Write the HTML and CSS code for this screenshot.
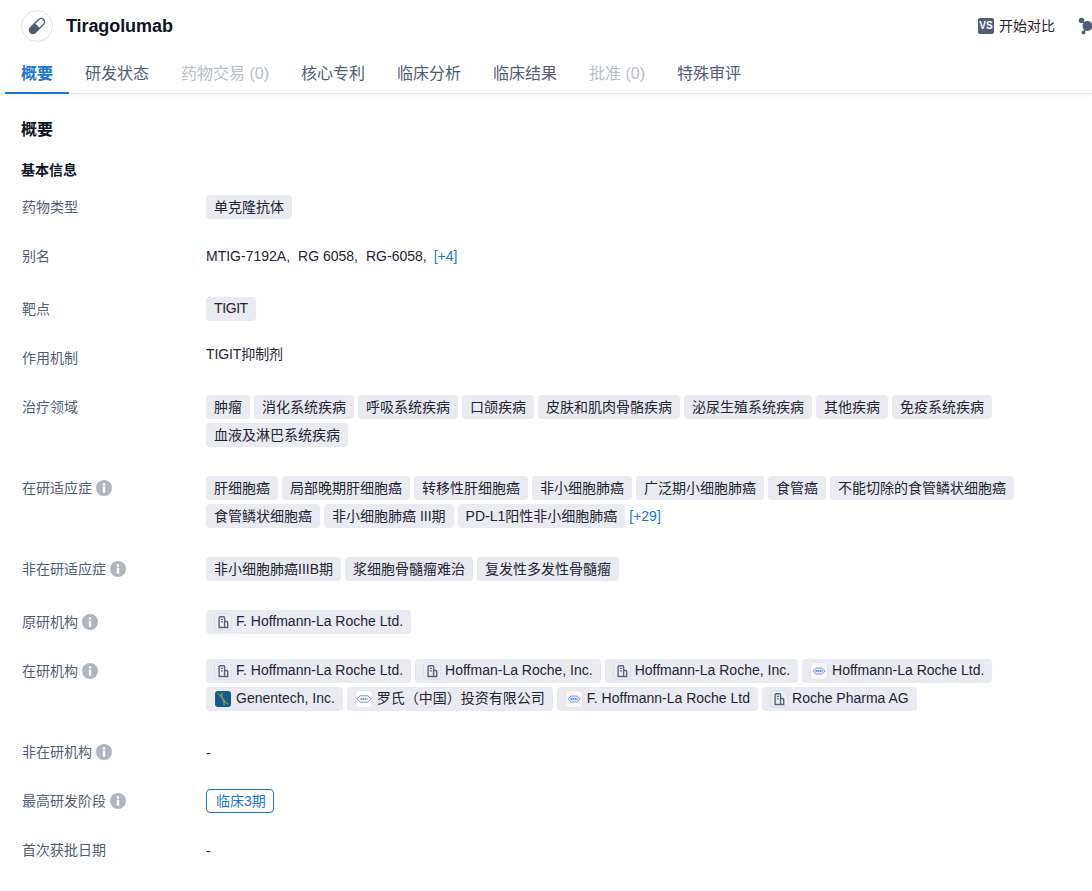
FILE: index.html
```html
<!DOCTYPE html>
<html lang="zh">
<head>
<meta charset="utf-8">
<title>Tiragolumab</title>
<link rel="stylesheet" href="styles.css">
</head>
<body>
<svg class="defs" width="0" height="0" aria-hidden="true">
  <symbol id="bld" viewBox="0 0 18 18">
    <rect x=".5" y=".5" width="17" height="17" rx="3.500" fill="#eceef2" stroke="#dcdfe7"/>
    <path d="M5.100 14.500V4.700a1 1 0 0 1 1-1h3.500a1 1 0 0 1 1 1v9.800zM10.600 8.500h2.100a1 1 0 0 1 1 1v5h-3.100" fill="none" stroke="#56647f" stroke-width="1.400"/>
    <path d="M6.900 6.300h2M6.900 8.800h2" stroke="#56647f" stroke-width="1.300"/>
  </symbol>
  <symbol id="roche" viewBox="0 0 18 18">
    <rect x=".5" y=".5" width="17" height="17" rx="3.500" fill="#fdf6f4" stroke="#e4e5ea"/>
    <path d="M2.800 9 6 6h6l3.200 3-3.200 3H6z" fill="#dde5f8" stroke="#7d9ada" stroke-width=".9"/>
    <path d="M5.500 9h7" stroke="#4f74cc" stroke-width="1.600" stroke-dasharray="1.500 .5"/>
  </symbol>
  <symbol id="roche2" viewBox="0 0 18 18">
    <rect x=".5" y=".5" width="17" height="17" rx="3.500" fill="#fff" stroke="#e4e5ea"/>
    <path d="M1.800 9 5.200 5.800h7.600L16.200 9l-3.400 3.200H5.200z" fill="#fff" stroke="#4f74cc" stroke-width=".8"/>
    <path d="M5.500 9h7" stroke="#4f74cc" stroke-width="1.600" stroke-dasharray="1.500 .5"/>
  </symbol>
  <symbol id="gene" viewBox="0 0 18 18">
    <rect width="16" height="16" x="1" y="1" rx="3" fill="#14598f"/>
    <path d="M3.500 3.500C9 6 9 12 14.500 14.500M8 3C6.500 7 11 11.500 10 15.500" fill="none" stroke="#7e9a44" stroke-width="1.300"/>
    <path d="M6 5.500l3-1M8 9h2.500M9.500 12.500l2.500-1" stroke="#7e9a44" stroke-width=".8"/>
  </symbol>
  <symbol id="info" viewBox="0 0 16 16">
    <circle cx="8" cy="8" r="8" fill="#b0b5c4"/>
    <rect x="6.800" y="3.300" width="2.400" height="2.300" fill="#fff"/>
    <rect x="6.800" y="6.800" width="2.400" height="5.900" fill="#fff"/>
  </symbol>
</svg>

<header class="topbar">
  <div class="title-wrap">
    <span class="logo">
      <svg width="18" height="18" viewBox="0 0 18 18"><g transform="rotate(-45 9 9)"><rect x="-1" y="4.800" width="20" height="8.400" rx="4.200" fill="#4f5d78"/><path d="M9.500 6.200h5.300a2.800 2.800 0 0 1 0 5.600H9.500z" fill="#fff"/></g></svg>
    </span>
    <h1 class="title">Tiragolumab</h1>
  </div>
  <div class="actions">
    <span class="vs">VS</span><span class="compare">开始对比</span>
    <svg class="share" width="16" height="18" viewBox="0 0 16 18"><circle cx="3.500" cy="3.500" r="2.800" fill="#4f5d78"/><circle cx="9.500" cy="9" r="5" fill="#4f5d78"/><circle cx="5.500" cy="15.500" r="2" fill="#4f5d78"/><path d="M3.500 3.500l6 5.500-4 6.500" stroke="#4f5d78" stroke-width="1.500" fill="none"/></svg>
  </div>
</header>

<nav class="tabs">
  <a class="tab active">概要</a>
  <a class="tab">研发状态</a>
  <a class="tab off">药物交易 (0)</a>
  <a class="tab">核心专利</a>
  <a class="tab">临床分析</a>
  <a class="tab">临床结果</a>
  <a class="tab off">批准 (0)</a>
  <a class="tab">特殊审评</a>
</nav>

<main class="content">
  <h2 class="h-main">概要</h2>
  <h3 class="h-sub">基本信息</h3>

  <div class="row"><div class="label">药物类型</div><div class="val"><span class="tag">单克隆抗体</span></div></div>

  <div class="row tall"><div class="label">别名</div><div class="val text"><span>MTIG-7192A,</span><span>RG 6058,</span><span>RG-6058,</span><a class="more">[+4]</a></div></div>

  <div class="row"><div class="label">靶点</div><div class="val"><span class="tag"><span class="narrow">TIGIT</span></span></div></div>

  <div class="row"><div class="label">作用机制</div><div class="val text raised"><span class="narrow-sm">TIGIT抑制剂</span></div></div>

  <div class="row tall"><div class="label">治疗领域</div><div class="val">
    <span class="tag">肿瘤</span><span class="tag">消化系统疾病</span><span class="tag">呼吸系统疾病</span><span class="tag">口颌疾病</span><span class="tag">皮肤和肌肉骨骼疾病</span><span class="tag">泌尿生殖系统疾病</span><span class="tag">其他疾病</span><span class="tag">免疫系统疾病</span><span class="tag">血液及淋巴系统疾病</span>
  </div></div>

  <div class="row tall"><div class="label">在研适应症<svg class="info"><use href="#info"/></svg></div><div class="val">
    <span class="tag">肝细胞癌</span><span class="tag">局部晚期肝细胞癌</span><span class="tag">转移性肝细胞癌</span><span class="tag">非小细胞肺癌</span><span class="tag">广泛期小细胞肺癌</span><span class="tag">食管癌</span><span class="tag">不能切除的食管鳞状细胞癌</span><span class="tag">食管鳞状细胞癌</span><span class="tag">非小细胞肺癌 III期</span><span class="tag">PD-L1阳性非小细胞肺癌</span><a class="more">[+29]</a>
  </div></div>

  <div class="row tall"><div class="label">非在研适应症<svg class="info"><use href="#info"/></svg></div><div class="val">
    <span class="tag">非小细胞肺癌IIIB期</span><span class="tag">浆细胞骨髓瘤难治</span><span class="tag">复发性多发性骨髓瘤</span>
  </div></div>

  <div class="row"><div class="label">原研机构<svg class="info"><use href="#info"/></svg></div><div class="val">
    <span class="tag org"><svg class="ico"><use href="#bld"/></svg><span class="latin">F. Hoffmann-La Roche Ltd.</span></span>
  </div></div>

  <div class="row tall"><div class="label">在研机构<svg class="info"><use href="#info"/></svg></div><div class="val">
    <span class="tag org"><svg class="ico"><use href="#bld"/></svg><span class="latin">F. Hoffmann-La Roche Ltd.</span></span>
    <span class="tag org"><svg class="ico"><use href="#bld"/></svg><span class="latin">Hoffman-La Roche, Inc.</span></span>
    <span class="tag org"><svg class="ico"><use href="#bld"/></svg><span class="latin">Hoffmann-La Roche, Inc.</span></span>
    <span class="tag org"><svg class="ico"><use href="#roche"/></svg><span class="latin">Hoffmann-La Roche Ltd.</span></span>
    <span class="tag org"><svg class="ico"><use href="#gene"/></svg><span class="latin">Genentech, Inc.</span></span>
    <span class="tag org"><svg class="ico"><use href="#roche2"/></svg><span class="latin">罗氏（中国）投资有限公司</span></span>
    <span class="tag org"><svg class="ico"><use href="#roche"/></svg><span class="latin">F. Hoffmann-La Roche Ltd</span></span>
    <span class="tag org"><svg class="ico"><use href="#bld"/></svg><span class="latin">Roche Pharma AG</span></span>
  </div></div>

  <div class="row"><div class="label">非在研机构<svg class="info"><use href="#info"/></svg></div><div class="val text dash">-</div></div>

  <div class="row"><div class="label">最高研发阶段<svg class="info"><use href="#info"/></svg></div><div class="val"><span class="phase">临床3期</span></div></div>

  <div class="row"><div class="label">首次获批日期</div><div class="val text dash">-</div></div>
</main>
</body>
</html>
```
FILE: styles.css
```css
* { box-sizing: border-box; }
html, body { margin: 0; padding: 0; height: 891px; overflow: hidden; }
body {
  background: #fff;
  color: #1f2433;
  font: 14px/24px "Liberation Sans", "Noto Sans CJK SC", sans-serif;
}
.defs { position: absolute; }

.topbar { height: 52px; display: flex; align-items: center; justify-content: space-between; padding-left: 21px; width: 1092px; }
.title-wrap { display: flex; align-items: center; gap: 13px; }
.logo { width: 32px; height: 32px; border: 1px solid #dcdfe6; border-radius: 50%; display: flex; align-items: center; justify-content: center; }
.title { margin: 0; font-size: 18px; line-height: 24px; font-weight: 700; color: #0f1424; letter-spacing: -.08px; }
.actions { display: flex; align-items: center; margin-right: -2px; }
.vs { width: 16px; height: 16px; border-radius: 2px; background: #4f5d78; color: #fff; font-size: 10px; line-height: 16px; font-weight: 700; text-align: center; margin-right: 5px; }
.compare { font-size: 14px; color: #1f2433; margin-right: 23px; }
.share { display: block; }

.tabs { height: 42px; display: flex; padding-left: 5px; border-bottom: 1px solid #e4e6eb; box-shadow: 0 1px 3px rgba(30,40,60,.08); }
.tab { padding: 0 16px; font-size: 16px; line-height: 44px; height: 42px; color: #4f5d78; }
.tab.active { color: #1976d2; font-weight: 700; border-bottom: 2px solid #1976d2; }
.tab.off { color: #b9bec9; }

.content { padding: 0 0 0 21px; }
.h-main { margin: 24px 0 0; font-size: 16px; line-height: 24px; font-weight: 700; color: #0f1424; }
.h-sub { margin: 16px 0 13px; font-size: 14px; line-height: 24px; font-weight: 700; color: #0f1424; }

.row { display: grid; grid-template-columns: 185px 830px; padding-bottom: 25px; }
.row.tall { padding-bottom: 29px; }
.label { display: flex; align-items: flex-start; color: #4f5d78; padding-left: 1px; line-height: 24px; }
.info { width: 16px; height: 16px; margin: 4px 0 0 4px; flex: none; }
.val { display: flex; flex-wrap: wrap; gap: 4px; align-items: center; align-content: flex-start; }
.val.text { gap: 8px; height: 24px; }
.val.raised { margin-top: -4px; }
.val.dash { line-height: 26px; }
.narrow-sm { letter-spacing: -.1px; }
.tag { height: 24px; padding: 0 8px; background: #e9ebf0; border-radius: 4px; line-height: 24px; white-space: nowrap; }
.tag.org { display: inline-flex; align-items: center; gap: 4px; }
.latin { display: block; margin-top: -2px; }
.narrow { display: block; margin-top: -1px; letter-spacing: -.4px; }
.ico { width: 18px; height: 18px; flex: none; }
.more { color: #1976d2; }
.val.text .more { margin-left: -1px; }
.phase { height: 24px; padding: 0 7px 0 9px; border: 1px solid #1976d2; border-radius: 4px; color: #1976d2; line-height: 22px; }
```
